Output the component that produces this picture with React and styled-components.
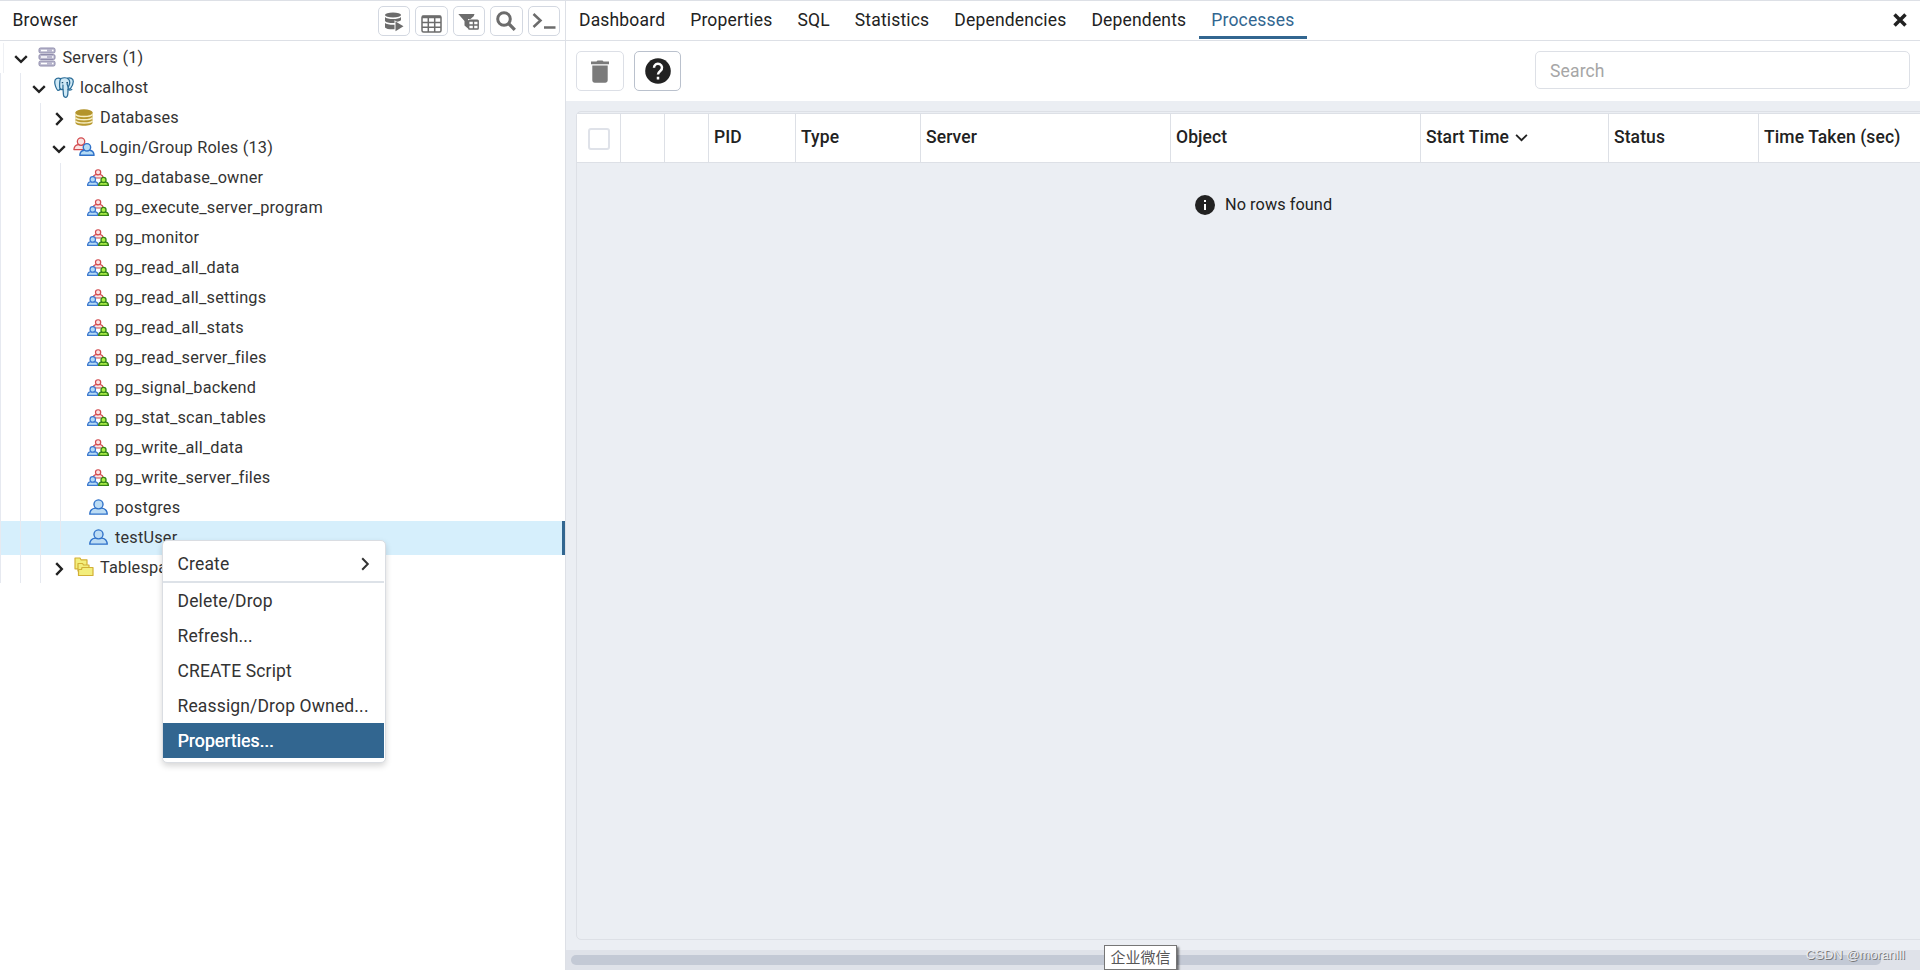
import React from "react";
import styled, { createGlobalStyle, css } from "styled-components";

const Global = createGlobalStyle`
  *, *::before, *::after { box-sizing: border-box; }
  body {
    margin: 0;
    background: #fff;
    color: #222;
    font-family: Roboto, "Liberation Sans", sans-serif;
    font-size: 17.5px;
    overflow: hidden;
  }
  svg { display: block; flex: none; }
`;

const line = "#dde0e6";

const Page = styled.div`
  display: flex;
  width: 1920px;
  height: 970px;
  border-top: 1px solid ${line};
  overflow: hidden;
`;

/* ---------- object browser ---------- */
const Sidebar = styled.aside`
  position: relative;
  display: flex;
  flex-direction: column;
  width: 566px;
  border-right: 1px solid ${line};
`;
const SideHeader = styled.header`
  display: flex;
  align-items: center;
  height: 40px;
  padding: 0 5px 0 12.5px;
  border-bottom: 1px solid ${line};
`;
const Title = styled.span`
  flex: 1;
  line-height: 39px;
  letter-spacing: 0.17px;
`;
const ToolGroup = styled.div`
  display: flex;
  gap: 5px;
`;
const ToolButton = styled.button`
  display: flex;
  align-items: center;
  justify-content: center;
  width: 32.5px;
  height: 30px;
  padding: ${(p) => p.$drop || 0}px 0 0;
  background: #fff;
  border: 1px solid #d3d8e1;
  border-radius: 5px;
  color: #6c6c6c;
`;
const Tree = styled.div`
  padding-top: 2px;
`;
const Row = styled.div`
  position: relative;
  display: flex;
  align-items: center;
  height: 30px;
  font-size: 16.3px;
  letter-spacing: 0.2px;
  white-space: nowrap;
  color: #333;
  ${(p) =>
    p.$selected &&
    css`
      height: 34px;
      margin: -2px 0;
      background: #d6effc;
      border-right: 3px solid #326690;
    `}
`;
const Guide = styled.span`
  flex: none;
  align-self: stretch;
  width: 20px;
  border-left: 1px solid #e6e9f0;
  ${(p) => p.$root && "width: 14px; margin-left: 3px; border-color: #eef0f4;"}
`;
const Toggle = styled.span`
  display: flex;
  justify-content: center;
  flex: none;
  width: 14px;
  padding-top: 1px;
  margin-left: ${(p) => p.$indent}px;
  color: #222;
`;
const IconBox = styled.span`
  display: flex;
  justify-content: center;
  flex: none;
  width: 22px;
  padding-bottom: 2px;
  margin-left: ${(p) => p.$gap}px;
  margin-right: ${(p) => p.$after || 5}px;
`;
const Label = styled.span`
  padding-bottom: 2px;
`;

/* ---------- context menu ---------- */
const Menu = styled.div`
  position: absolute;
  z-index: 5;
  left: 161.5px;
  top: 539px;
  width: 224px;
  padding: 5px 0.5px 4px;
  background: #fff;
  border: 1px solid #dadde2;
  border-radius: 5px;
  box-shadow: 0 3px 6px rgba(0, 0, 0, 0.16);
`;
const MenuItem = styled.div`
  display: flex;
  align-items: center;
  justify-content: space-between;
  height: 35px;
  padding: 0 12px 0 14.5px;
  letter-spacing: 0.15px;
  white-space: nowrap;
  color: #333;
  ${(p) => p.$active && "background: #326690; color: #fff; text-shadow: 0.4px 0 #fff;"}
`;
const MenuLine = styled.div`
  height: 2px;
  background: #dde2e8;
`;

/* ---------- main panel ---------- */
const Main = styled.main`
  position: relative;
  display: flex;
  flex-direction: column;
  flex: 1;
  min-width: 0;
`;
const TabBar = styled.nav`
  display: flex;
  height: 40px;
  padding-left: 0.5px;
  border-bottom: 1px solid ${line};
`;
const Tab = styled.span`
  height: 38px;
  padding: 0 12.5px;
  line-height: 39px;
  letter-spacing: 0.17px;
  white-space: nowrap;
  border-bottom: 3px solid ${(p) => (p.$active ? "#326690" : "transparent")};
  color: ${(p) => (p.$active ? "#326690" : "#222")};
`;
const CloseTab = styled.span`
  margin: 12px 13px 0 auto;
`;
const ActionBar = styled.div`
  display: flex;
  gap: 10px;
  height: 60px;
  padding: 10px 10px 0;
`;
const ActionButton = styled.button`
  display: flex;
  align-items: center;
  justify-content: center;
  width: ${(p) => (p.$muted ? 48 : 47)}px;
  height: 40px;
  padding: 0;
  background: #fff;
  border: 1px solid ${(p) => (p.$muted ? "#dcdfe6" : "#bac1cd")};
  border-radius: 5px;
  color: ${(p) => (p.$muted ? "#7b7b7b" : "#222")};
`;
const SearchBox = styled.input`
  width: 375px;
  height: 38px;
  margin-left: auto;
  padding: 1px 14px 0;
  border: 1px solid ${line};
  border-radius: 5px;
  font: inherit;
  letter-spacing: 0.15px;
  outline: none;
  &::placeholder { color: #a6a6a6; opacity: 1; }
`;
const TableArea = styled.section`
  flex: 1;
  padding: 10px 0 10px 10px;
  background: #ebeef3;
  overflow: hidden;
`;
const Table = styled.div`
  width: 1400px;
  height: 829px;
  padding: 1px 0 0;
  border: 1px solid ${line};
  border-radius: 5px;
`;
const HeadRow = styled.div`
  display: flex;
  height: 50px;
  background: #fff;
  border-top: 1px solid ${line};
  border-bottom: 1px solid ${line};
`;
const HeadCell = styled.div`
  display: flex;
  align-items: center;
  flex: none;
  gap: 6px;
  width: ${(p) => p.$w}px;
  padding: 0 5px 2px;
  border-right: 1px solid ${line};
  font-weight: 500;
  letter-spacing: 0.1px;
  white-space: nowrap;
`;
const CheckBox = styled.span`
  width: 22px;
  height: 22px;
  margin: 4px 0 0 6px;
  border: 2px solid #dfe2e9;
  border-radius: 3px;
`;
const Empty = styled.div`
  display: flex;
  align-items: center;
  gap: 10px;
  margin: 31px 0 0 618px;
  font-size: 16.3px;
  line-height: 22px;
  letter-spacing: 0.06px;
`;
const ScrollTrack = styled.div`
  height: 20px;
  padding: 5px 39px 5px 5px;
  background: #dfe2e9;
`;
const ScrollThumb = styled.div`
  height: 10px;
  border-radius: 5px;
  background: #c3c9d5;
`;
const Tooltip = styled.div`
  position: absolute;
  left: 538px;
  bottom: 0;
  width: 73px;
  height: 25px;
  background: #fff;
  border: 1px solid #767676;
  box-shadow: 2px 2px 2px rgba(0, 0, 0, 0.5);
  color: #575757;
  font: 15px/22px "Noto Sans CJK SC", sans-serif;
  text-align: center;
  white-space: nowrap;
`;
const Watermark = styled.div`
  position: absolute;
  right: 15px;
  bottom: 6px;
  font: 13px/18px "Liberation Sans", sans-serif;
  color: #e9ebef;
  text-shadow: 1px 1px 0 #777;
  white-space: nowrap;
`;

/* ---------- icons ---------- */
const Chevron = ({ right, size = 14, w = 2.4 }) => (
  <svg width={size} height={size} viewBox="0 0 14 14" fill="none" stroke="currentColor" strokeWidth={w}>
    {right ? <path d="M4.200 1.200 9.800 7l-5.600 5.800" /> : <path d="M1.200 4.200 7 9.800l5.800-5.600" />}
  </svg>
);
const ServersIcon = () => (
  <svg width="18" height="20" viewBox="0 0 18 20" stroke="#8f8cac">
    {[1, 7.5, 14].map((y) => (
      <g key={y}>
        <rect x="1" y={y} width="16" height="5" rx="1.500" fill="#b9b7cd" />
        <path d={`M3 ${y + 2.5}h6M14 ${y + 2.5}h1.500`} stroke="#fff" strokeWidth="1.600" />
      </g>
    ))}
  </svg>
);
const ElephantIcon = () => (
  <svg width="20" height="21" viewBox="0 0 20 21" fill="#cfe9f6" stroke="#2c6d98" strokeWidth="1.250" strokeLinejoin="round" strokeLinecap="round">
    <path d="M6.600 1.600C3.600.2.700 1.500.7 5c0 2.700 1.500 7 3 8.200 1 .7 1.800-.6 2.800-1.700" />
    <path d="M13 1.400c3.500-1.200 6.300.2 6.300 3 0 2.400-1.500 5.600-3.200 7.800l-2.300-.6" />
    <path d="M7 1.500c2.200-1 5.800-1 7.600.7 1.700 2 1 5.500-.4 8l-.4 7c-.2 2-1 3.100-2.300 3.100-1.400 0-2-1-2.100-3l-.3-4.800c-2.700.3-3.700-1-3.500-4C5.700 6 5.300 3 7 1.500Z" />
    <path d="M8.800 12.300c.4-1.500 0-2.200.2-4.300M14.200 10.200c-.7-1.600-1.700-3.300-.9-4.700M14 12.500c1 .8 2.500.7 3.800 0M5.600 12.700l2.600-.2" fill="none" />
    <path d="M8.200 5.700h.5M13 5.600h.4" stroke="#174b70" />
  </svg>
);
const DatabaseIcon = () => (
  <svg width="18" height="17" viewBox="0 0 18 17">
    <path d="M.5 3v11c0 1.500 3.800 2.700 8.500 2.700s8.500-1.200 8.500-2.700V3Z" fill="#b8992f" />
    <path d="M.5 5.500C1.500 7 5 7.600 9 7.600s7.500-.6 8.500-2.100M.5 8.700c1 1.500 4.500 2.100 8.500 2.100s7.500-.6 8.500-2.100M.5 11.900C1.500 13.400 5 14 9 14s7.500-.6 8.500-2.100" fill="none" stroke="#f6eec4" strokeWidth="1.500" />
    <ellipse cx="9" cy="3.200" rx="8.500" ry="2.900" fill="#b3942c" />
  </svg>
);
const Bust = ({ x = 0, y = 0, s = 1, fill, stroke, w = 1.3 }) => (
  <g transform={`translate(${x} ${y}) scale(${s})`} fill={fill} stroke={stroke} strokeWidth={w / s} strokeLinejoin="round">
    <path d="M.7 14.300c.2-3.300 1.700-5.300 5-5.800h6.600c3.300.5 4.800 2.500 5 5.800Z" />
    <circle cx="9" cy="5" r="4.300" />
  </g>
);
const UserIcon = () => (
  <svg width="19" height="16" viewBox="0 0 18 15">
    <Bust fill="#bcdcf4" stroke="#2f71c9" />
  </svg>
);
const RolesIcon = () => (
  <svg width="22" height="20" viewBox="0 0 22 20">
    <Bust x={0.3} y={0.3} s={0.86} fill="#fbe3e3" stroke="#d24a4e" />
    <Bust x={6.2} y={6} s={0.86} fill="#b5dbf5" stroke="#2f71c9" w={1.4} />
  </svg>
);
const GroupIcon = () => (
  <svg width="22" height="17" viewBox="0 0 22 17">
    <Bust x={5.6} y={0.3} s={0.61} fill="#fbe3e3" stroke="#d24a4e" w={1.2} />
    <Bust x={0} y={7.2} s={0.64} fill="#b5dbf5" stroke="#3b78cf" w={1.2} />
    <Bust x={11.2} y={8} s={0.59} fill="#aef04a" stroke="#358316" w={1.3} />
  </svg>
);
const FolderIcon = () => (
  <svg width="20" height="20" viewBox="0 0 20 20" fill="#f3ee7c" stroke="#d2b036" strokeWidth="1.200" strokeLinejoin="round">
    <path d="M1 11.800V1h5l1 1.800h6v9Z" />
    <path d="M4 14V6.500h4.500L9.500 8H15v6Z" />
    <path d="M4.500 18.500v-6h3l.5-2h11v8Z" />
  </svg>
);
const QueryIcon = () => (
  <svg width="20" height="20" viewBox="0 0 20 20" fill="currentColor">
    <ellipse cx="9" cy="3" rx="8" ry="2.600" />
    <path d="M1 5c1 1.500 4.500 2 8 2s7-.5 8-2v3.300c-1 .8-2.500 1.300-4 1.400l-2.500-1.500V11c-4.500.2-8.500-.4-9.500-2ZM1 11c1 1.200 5 1.900 9.500 1.800v4.500C6 17.500 2 17 1 15.500Z" />
    <path d="m11.500 9.500 8 4.800-8 5Z" />
  </svg>
);
const GridIcon = () => (
  <svg width="21" height="18" viewBox="0 0 21 18" fill="none" stroke="currentColor" strokeWidth="1.500">
    <rect x="1" y="1" width="19" height="16" rx="1.500" />
    <path d="M1 2h19" strokeWidth="2.500" />
    <path d="M1 7.400h19M1 12.200h19M7.300 3v14M13.700 3v14" />
  </svg>
);
const FilterIcon = () => (
  <svg width="21" height="18" viewBox="0 0 21 18" fill="currentColor">
    <path d="M.3 1h16.200l-.8 2.200-3.200 2.800H10v9.500l-3.500-3V8Z" />
    <g fill="none" stroke="currentColor" strokeWidth="1.400">
      <rect x="10.700" y="7.300" width="9.500" height="8.700" rx=".8" fill="#fff" />
      <path d="M10.700 8h9.500M10.700 12h9.500M15.500 8v8" />
    </g>
  </svg>
);
const LensIcon = () => (
  <svg width="20" height="20" viewBox="0 0 20 20" fill="none" stroke="currentColor" strokeWidth="3">
    <circle cx="8" cy="8" r="6.300" />
    <path d="m12.500 12.500 6.300 6.300" strokeWidth="3.300" />
  </svg>
);
const PromptIcon = () => (
  <svg width="24" height="16" viewBox="0 0 24 16" fill="none" stroke="currentColor" strokeWidth="2.500">
    <path d="m1.500 1 7 6.500-7 6.500M12 14.500h11.500" />
  </svg>
);
const TrashIcon = () => (
  <svg width="18" height="23" viewBox="0 0 18 23" fill="currentColor">
    <path d="M0 1.500h5.500l1-1h5l1 1H18v2.800H0ZM1.300 5.500h15.400v14.700c0 1.500-1 2.500-2.500 2.500H3.800c-1.500 0-2.500-1-2.500-2.500Z" />
  </svg>
);
const HelpIcon = () => (
  <svg width="26" height="26" viewBox="0 0 26 26">
    <circle cx="13" cy="13" r="12.800" fill="currentColor" />
    <path d="M9 9.700a4 4 0 1 1 6.500 3.100c-1.500 1.200-2.500 1.700-2.500 3.800M13 18.800v2.600" fill="none" stroke="#fff" strokeWidth="2.500" />
  </svg>
);
const InfoIcon = () => (
  <svg width="20" height="20" viewBox="0 0 20 20">
    <circle cx="10" cy="10" r="10" fill="#222" />
    <path d="M10 5v2M10 9v6" stroke="#fff" strokeWidth="2" />
  </svg>
);
const CrossIcon = () => (
  <svg width="14" height="14" viewBox="0 0 14 14" stroke="#222" strokeWidth="3.500">
    <path d="m1.500 1.500 11 11M12.500 1.500l-11 11" />
  </svg>
);

const groups = [
  "pg_database_owner", "pg_execute_server_program", "pg_monitor", "pg_read_all_data",
  "pg_read_all_settings", "pg_read_all_stats", "pg_read_server_files", "pg_signal_backend",
  "pg_stat_scan_tables", "pg_write_all_data", "pg_write_server_files",
];

const Guides = ({ count }) => Array.from({ length: count }, (_, i) => <Guide key={i} />);

const Branch = ({ level, closed, icon: Icon, label, indent, gap }) => (
  <Row>
    {level ? <Guides count={level} /> : <Guide $root />}
    <Toggle $indent={indent}><Chevron right={closed} /></Toggle>
    <IconBox $gap={gap}><Icon /></IconBox>
    <Label>{label}</Label>
  </Row>
);

const Leaf = ({ icon: Icon, label, selected }) => (
  <Row $selected={selected}>
    <Guides count={4} />
    <IconBox $gap={7} $after={6}><Icon /></IconBox>
    <Label>{label}</Label>
  </Row>
);

const tabs = ["Dashboard", "Properties", "SQL", "Statistics", "Dependencies", "Dependents", "Processes"];
const columns = [
  ["", 44], ["", 44], ["PID", 87], ["Type", 125], ["Server", 250], ["Object", 250],
  ["Start Time", 188], ["Status", 150], ["Time Taken (sec)", 188],
];
const tools = [
  { Icon: QueryIcon, drop: 3 },
  { Icon: GridIcon, drop: 6 },
  { Icon: FilterIcon, drop: 3 },
  { Icon: LensIcon, drop: 0 },
  { Icon: PromptIcon, drop: 0 },
];

export default function App() {
  return (
    <Page>
      <Global />
      <Sidebar>
        <SideHeader>
          <Title>Browser</Title>
          <ToolGroup>
            {tools.map(({ Icon, drop }, i) => <ToolButton key={i} $drop={drop}><Icon /></ToolButton>)}
          </ToolGroup>
        </SideHeader>
        <Tree>
          <Branch level={0} indent={-3} gap={7.5} icon={ServersIcon} label="Servers (1)" />
          <Branch level={2} indent={-8.5} gap={7.5} icon={ElephantIcon} label="localhost" />
          <Branch level={3} indent={-8.5} gap={7.5} closed icon={DatabaseIcon} label="Databases" />
          <Branch level={3} indent={-8.5} gap={7.5} icon={RolesIcon} label="Login/Group Roles (13)" />
          {groups.map((g) => <Leaf key={g} icon={GroupIcon} label={g} />)}
          <Leaf icon={UserIcon} label="postgres" />
          <Leaf icon={UserIcon} label="testUser" selected />
          <Branch level={3} indent={-8.5} gap={7.5} closed icon={FolderIcon} label="Tablespaces" />
        </Tree>
        <Menu>
          <MenuItem>Create <Chevron right w={2} /></MenuItem>
          <MenuLine />
          <MenuItem>Delete/Drop</MenuItem>
          <MenuItem>Refresh...</MenuItem>
          <MenuItem>CREATE Script</MenuItem>
          <MenuItem>Reassign/Drop Owned...</MenuItem>
          <MenuItem $active>Properties...</MenuItem>
        </Menu>
      </Sidebar>
      <Main>
        <TabBar>
          {tabs.map((t) => <Tab key={t} $active={t === "Processes"}>{t}</Tab>)}
          <CloseTab><CrossIcon /></CloseTab>
        </TabBar>
        <ActionBar>
          <ActionButton $muted><TrashIcon /></ActionButton>
          <ActionButton><HelpIcon /></ActionButton>
          <SearchBox placeholder="Search" />
        </ActionBar>
        <TableArea>
          <Table>
            <HeadRow>
              <HeadCell $w={44}><CheckBox /></HeadCell>
              {columns.map(([name, w], i) => (
                <HeadCell key={i} $w={w}>
                  {name}
                  {name === "Start Time" && <Chevron size={13} w={2} />}
                </HeadCell>
              ))}
            </HeadRow>
            <Empty><InfoIcon />No rows found</Empty>
          </Table>
        </TableArea>
        <ScrollTrack><ScrollThumb /></ScrollTrack>
        <Tooltip>企业微信</Tooltip>
        <Watermark>CSDN @moranlll</Watermark>
      </Main>
    </Page>
  );
}
